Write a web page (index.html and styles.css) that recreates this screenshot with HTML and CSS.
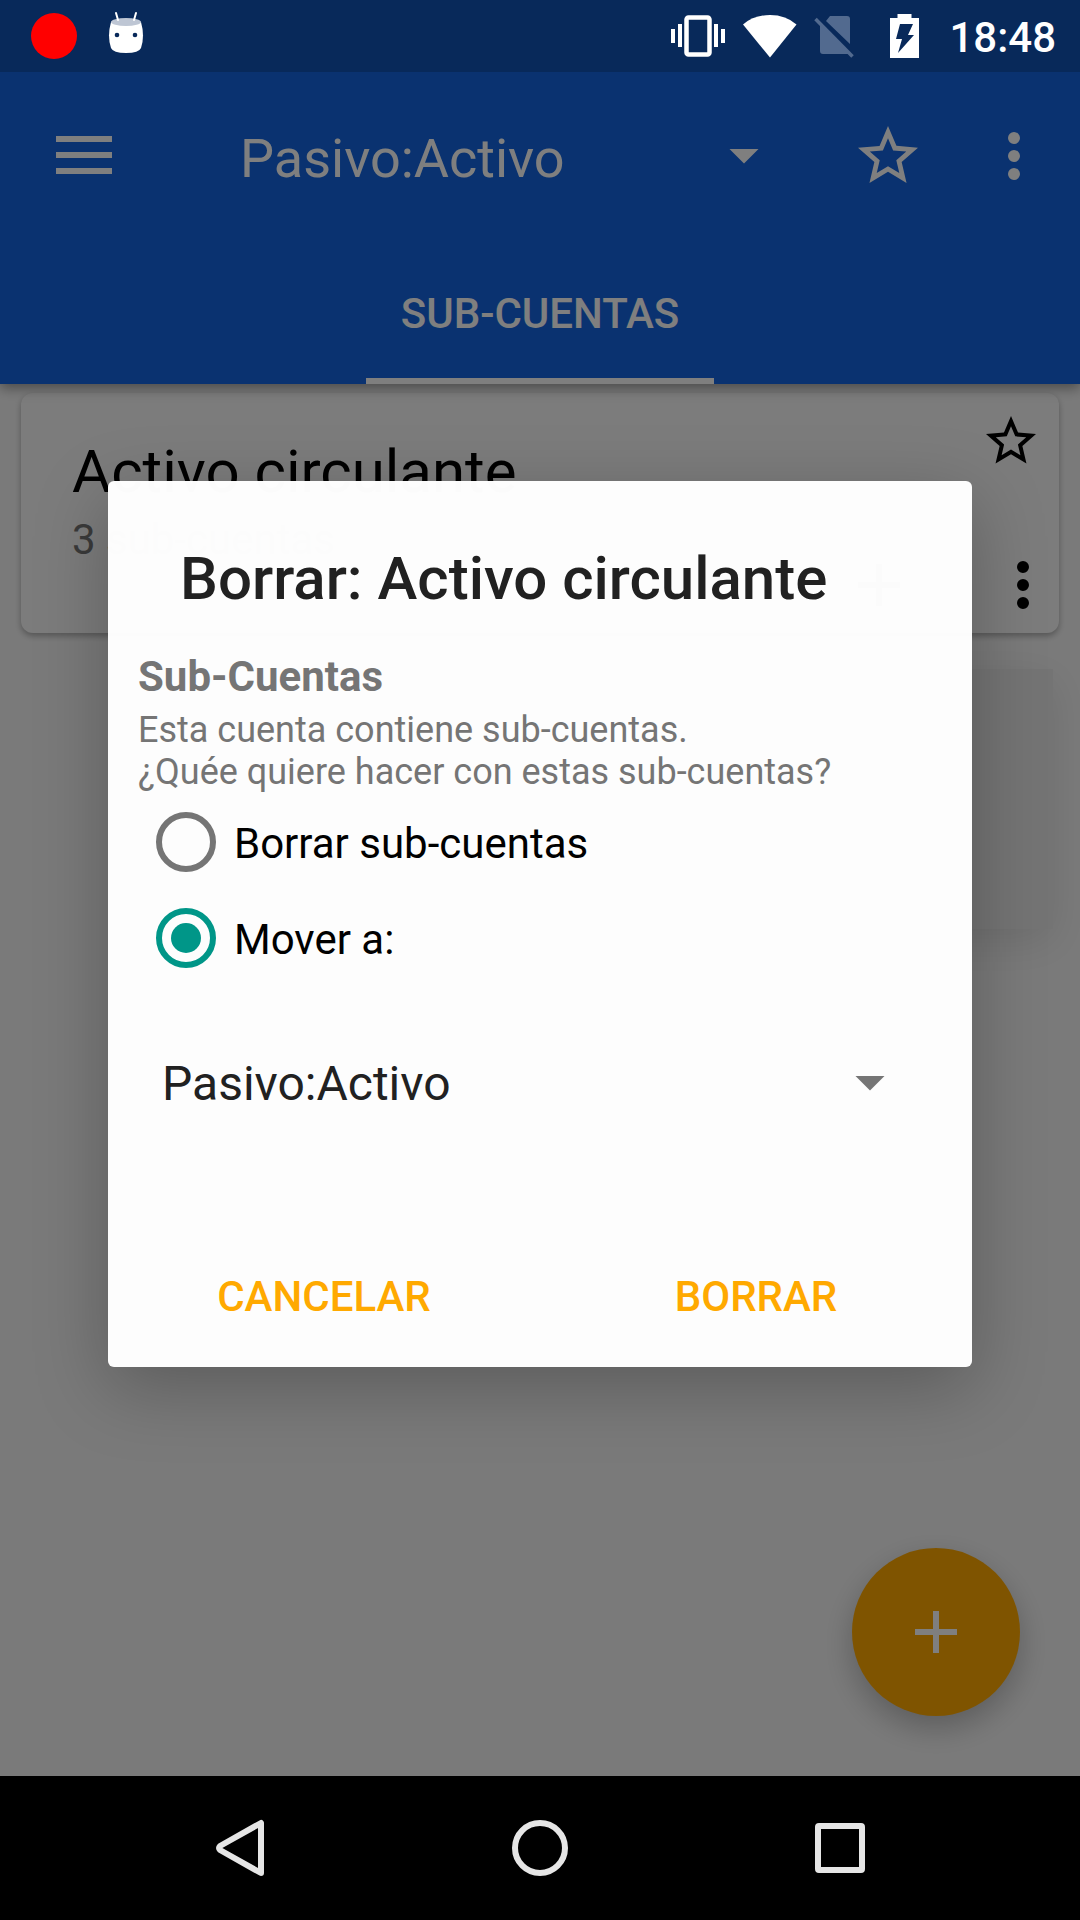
FILE: index.html
```html
<!DOCTYPE html>
<html lang="es">
<head>
<meta charset="utf-8">
<meta name="viewport" content="width=device-width, initial-scale=1">
<title>Pasivo:Activo</title>
<link rel="stylesheet" href="styles.css">
</head>
<body>
<header class="status-bar">
  <span class="record-dot"></span>
  <svg class="status-droid" width="36" height="44" viewBox="0 0 36 44" aria-hidden="true">
    <path d="M3 12Q18 6 33 12Q37 26 33 38Q31 43 18 43Q5 43 3 38Q-1 26 3 12Z" fill="#fff"/>
    <ellipse cx="18" cy="12" rx="15" ry="4" fill="#bec6d4"/>
    <path d="M8 3l2 7M28 3l-2 7" stroke="#fff" stroke-width="2" stroke-linecap="round"/>
    <circle cx="9" cy="25" r="2.3" fill="#08295a"/><circle cx="27" cy="25" r="2.3" fill="#08295a"/>
  </svg>
  <div class="status-right">
    <svg width="54" height="44" viewBox="0 0 54 44" aria-hidden="true">
      <rect x="15.5" y="3.5" width="23" height="37" rx="2" fill="none" stroke="#fff" stroke-width="4.5"/>
      <path d="M0 15h4v14H0zM7 10h4v23H7zM43 10h4v23h-4zM50 15h4v14h-4z" fill="#fff"/>
    </svg>
    <svg class="status-wifi" width="54" height="44" viewBox="0 0 54 44" aria-hidden="true">
      <path d="M0 10.500Q11 1 27 1Q43 1 53.500 10.500L27 43.500Z" fill="#fff"/>
    </svg>
    <svg class="status-sim" width="40" height="44" viewBox="0 0 40 44" aria-hidden="true">
      <path d="M16 2h17a3 3 0 0 1 3 3v25L12 7zM6 11L35 40H9a3 3 0 0 1-3-3z" fill="#526a8f"/>
      <path d="M1.500 5L38.500 42.500" stroke="#526a8f" stroke-width="3.500"/>
    </svg>
    <svg class="status-battery" width="29" height="44" viewBox="0 0 29 44" aria-hidden="true">
      <path d="M7.500 0h14v4H29v40H0V4h7.500z" fill="#fff"/>
      <path d="M10 10h13l-5 11h6L8 39l4-14H6z" fill="#08295a"/>
    </svg>
    <time class="clock">18:48</time>
  </div>
</header>

<div class="app">
  <header class="app-bar">
    <div class="toolbar">
      <button class="icon-button menu-button" type="button" aria-label="Menú">
        <svg width="56" height="40" viewBox="0 0 56 40"><path d="M0 0h56v6H0zM0 16h56v6H0zM0 32h56v6H0z" fill="currentColor"/></svg>
      </button>
      <div class="select-box toolbar-select">
        <select class="select" aria-label="Cuenta"><option>Pasivo:Activo</option></select>
      </div>
      <button class="icon-button" type="button" aria-label="Favorita">
        <svg width="72" height="72" viewBox="0 0 24 24"><path d="M22 9.240l-7.190-.62L12 2 9.190 8.630 2 9.240l5.460 4.730L5.820 21 12 17.270 18.180 21l-1.630-7.030L22 9.240zM12 15.400l-3.760 2.270 1-4.280-3.320-2.880 4.380-.38L12 6.100l1.710 4.040 4.380.38-3.320 2.880 1 4.280L12 15.400z" fill="currentColor"/></svg>
      </button>
      <button class="icon-button overflow-button" type="button" aria-label="Más opciones">
        <svg width="72" height="72" viewBox="0 0 24 24"><path d="M12 8a2 2 0 1 0 0-4 2 2 0 0 0 0 4zm0 2a2 2 0 1 0 0 4 2 2 0 0 0 0-4zm0 6a2 2 0 1 0 0 4 2 2 0 0 0 0-4z" fill="currentColor"/></svg>
      </button>
    </div>
    <nav class="tabs"><a class="tab" href="#sub">SUB-CUENTAS</a></nav>
  </header>

  <main class="content" id="sub">
    <article class="card">
      <div class="card-text">
        <h2 class="card-title">Activo circulante</h2>
        <p class="card-meta">3 sub-cuentas</p>
      </div>
      <div class="card-actions">
        <button class="icon-button card-star" type="button" aria-label="Favorita">
          <svg width="60" height="60" viewBox="0 0 24 24"><path d="M22 9.240l-7.190-.62L12 2 9.190 8.630 2 9.240l5.460 4.730L5.820 21 12 17.270 18.180 21l-1.630-7.030L22 9.240zM12 15.400l-3.760 2.270 1-4.280-3.320-2.880 4.380-.38L12 6.100l1.710 4.040 4.380.38-3.320 2.880 1 4.280L12 15.400z" fill="currentColor"/></svg>
        </button>
        <div class="card-buttons">
          <button class="icon-button" type="button" aria-label="Añadir">
            <svg width="72" height="72" viewBox="0 0 24 24"><path d="M19 13h-6v6h-2v-6H5v-2h6V5h2v6h6z" fill="currentColor"/></svg>
          </button>
          <button class="icon-button" type="button" aria-label="Más opciones">
            <svg width="72" height="72" viewBox="0 0 24 24"><path d="M12 8a2 2 0 1 0 0-4 2 2 0 0 0 0 4zm0 2a2 2 0 1 0 0 4 2 2 0 0 0 0-4zm0 6a2 2 0 1 0 0 4 2 2 0 0 0 0-4z" fill="currentColor"/></svg>
          </button>
        </div>
        <div class="popup-shade"></div>
      </div>
    </article>
    <button class="fab" type="button" aria-label="Nueva cuenta">
      <svg width="72" height="72" viewBox="0 0 24 24"><path d="M19 13h-6v6h-2v-6H5v-2h6V5h2v6h6z" fill="currentColor"/></svg>
    </button>
  </main>
</div>

<div class="scrim">
  <form class="dialog" role="dialog" aria-labelledby="dialog-title">
    <h1 class="dialog-title" id="dialog-title">Borrar: Activo circulante</h1>
    <fieldset class="dialog-body">
      <legend class="section-title">Sub-Cuentas</legend>
      <p class="section-text">Esta cuenta contiene sub-cuentas.<br>¿Quée quiere hacer con estas sub-cuentas?</p>
      <label class="option"><input class="radio" type="radio" name="accion" value="borrar"><span>Borrar sub-cuentas</span></label>
      <label class="option"><input class="radio" type="radio" name="accion" value="mover" checked><span>Mover a:</span></label>
      <div class="select-box dialog-select">
        <select class="select" aria-label="Mover a"><option>Pasivo:Activo</option></select>
      </div>
    </fieldset>
    <div class="dialog-actions">
      <button class="text-button" type="button">CANCELAR</button>
      <button class="text-button" type="button">BORRAR</button>
    </div>
  </form>
</div>

<nav class="nav-bar">
  <button class="nav-button" type="button" aria-label="Atrás">
    <svg width="60" height="60" viewBox="0 0 60 60"><path d="M51 5v50L10 32q-2-2 0-4z" fill="none" stroke="#e6e6e6" stroke-width="6" stroke-linejoin="round"/></svg>
  </button>
  <button class="nav-button" type="button" aria-label="Inicio">
    <svg width="60" height="60" viewBox="0 0 60 60"><circle cx="30" cy="30" r="25" fill="none" stroke="#e6e6e6" stroke-width="6"/></svg>
  </button>
  <button class="nav-button" type="button" aria-label="Recientes">
    <svg width="60" height="60" viewBox="0 0 60 60"><rect x="8" y="8" width="44" height="44" rx="1" fill="none" stroke="#e6e6e6" stroke-width="6" stroke-linejoin="round"/></svg>
  </button>
</nav>
</body>
</html>
```

FILE: styles.css
```css
:root {
  --primary: #1465e0;
  --accent: #ffa900;
  --teal: #009688;
  --status-height: 72px;
  --nav-height: 144px;
}

* {
  box-sizing: border-box;
}

body {
  margin: 0;
  min-height: 100vh;
  display: flex;
  flex-direction: column;
  position: relative;
  background: #f5f5f5;
  font-family: Roboto, "Noto Sans", sans-serif;
  font-size: 42px;
}

h1, h2, p {
  margin: 0;
}

button {
  border: 0;
  padding: 0;
  background: none;
  font: inherit;
  color: inherit;
}

svg {
  display: block;
}

/* Status bar */
.status-bar {
  position: relative;
  z-index: 3;
  height: var(--status-height);
  padding: 0 24px 0 31px;
  display: flex;
  align-items: center;
  background: #08295a;
  color: #fff;
}

.record-dot {
  width: 46px;
  height: 46px;
  border-radius: 50%;
  background: #f00;
}

.status-droid {
  margin: 0 0 8px 31px;
}

.status-right {
  margin-left: auto;
  display: flex;
  align-items: center;
}

.status-wifi {
  margin-left: 18px;
}

.status-sim {
  margin-left: 17px;
}

.status-battery {
  margin-left: 36px;
}

.clock {
  margin-left: 30px;
  padding-top: 3px;
  font-weight: 500;
  line-height: 48px;
}

/* App */
.app {
  flex: 1;
  display: flex;
  flex-direction: column;
}

.app-bar {
  background: var(--primary);
  color: #fff;
  box-shadow: 0 4px 12px rgba(0, 0, 0, 0.4);
  position: relative;
}

.toolbar {
  height: 168px;
  padding: 0 30px 0 56px;
  display: flex;
  align-items: center;
}

.toolbar-select {
  flex: 1;
  margin: 0 36px 0 128px;
  font-size: 54px;
}

.toolbar-select .select {
  padding-top: 4px;
}

.overflow-button {
  margin-left: 54px;
}

.select-box {
  display: flex;
  align-items: center;
}

.select-box::after {
  content: "";
  width: 30px;
  height: 15px;
  margin: 0 57px 0 -87px;
  background: currentColor;
  clip-path: polygon(0 0, 100% 0, 50% 100%);
  pointer-events: none;
}

.select {
  appearance: none;
  flex: 1;
  min-width: 0;
  height: 96px;
  border: 0;
  padding: 0;
  background: none;
  font: inherit;
  color: inherit;
}

.tabs {
  height: 144px;
  display: flex;
  justify-content: center;
}

.tab {
  padding: 8px 35px 0;
  display: flex;
  align-items: center;
  border-bottom: 6px solid #fff;
  color: inherit;
  font-weight: 500;
  text-decoration: none;
}

.content {
  flex: 1;
  padding: 9px 21px 60px;
  display: flex;
  flex-direction: column;
}

.card {
  min-height: 240px;
  padding-left: 51px;
  display: flex;
  justify-content: space-between;
  border-radius: 12px;
  background: #f8f8f8;
  box-shadow: 0 3px 6px rgba(0, 0, 0, 0.3);
  color: #000;
}

.card-text {
  padding-top: 43px;
}

.card-title {
  font-size: 60px;
  font-weight: 400;
  line-height: 72px;
}

.card-meta {
  margin-top: 8px;
  line-height: 48px;
  color: #757575;
}

.card-actions {
  position: relative;
  padding: 18px 0 12px;
  display: flex;
  flex-direction: column;
  justify-content: space-between;
  align-items: flex-end;
}

.card-star {
  margin-right: 18px;
}

.card-buttons {
  display: flex;
  gap: 72px;
}

/* Shade of the card's menu, fading out below the overflow button */
.popup-shade {
  position: absolute;
  top: 276px;
  right: 6px;
  width: 480px;
  height: 260px;
  background: rgba(0, 0, 0, 0.05);
  box-shadow: 0 12px 40px rgba(0, 0, 0, 0.1);
  pointer-events: none;
}

.fab {
  width: 168px;
  height: 168px;
  margin: auto 39px 0 auto;
  display: flex;
  align-items: center;
  justify-content: center;
  border-radius: 50%;
  background: var(--accent);
  color: #fff;
  box-shadow: 0 12px 30px rgba(0, 0, 0, 0.24);
}

/* Dialog */
.scrim {
  position: absolute;
  inset: 0;
  z-index: 2;
  padding: var(--status-height) 10% var(--nav-height);
  display: flex;
  align-items: center;
  background: rgba(0, 0, 0, 0.5);
}

.dialog {
  flex: 1;
  min-width: 0;
  padding-top: 60px;
  border-radius: 6px;
  background: rgba(255, 255, 255, 0.985);
  box-shadow: 0 20px 72px rgba(0, 0, 0, 0.25);
}

.dialog-title {
  padding: 0 72px;
  font-size: 60px;
  font-weight: 500;
  line-height: 76px;
  color: #212121;
}

.dialog-body {
  min-width: 0;
  margin: 36px 0 0;
  border: 0;
  padding: 0 30px;
}

.section-title {
  padding: 0;
  font-weight: 700;
  line-height: 48px;
  color: #757575;
}

.section-text {
  margin: 8px 0 1px;
  font-size: 36px;
  line-height: 42px;
  color: #757575;
}

.option {
  height: 96px;
  padding-left: 18px;
  display: flex;
  align-items: center;
  gap: 18px;
  color: #000;
}

.option span {
  padding-top: 2px;
}

.radio {
  appearance: none;
  width: 60px;
  height: 60px;
  margin: 0;
  border: 6px solid #757575;
  border-radius: 50%;
}

.radio:checked {
  border-color: var(--teal);
  padding: 9px;
  background: var(--teal) content-box;
}

.dialog-select {
  margin-top: 49px;
  font-size: 48px;
  color: #757575;
}

.dialog-select .select {
  padding-left: 24px;
  color: #212121;
}

.dialog-actions {
  margin-top: 94px;
  display: flex;
}

.text-button {
  flex: 1;
  height: 142px;
  font-weight: 500;
  color: var(--accent);
}

/* System navigation */
.nav-bar {
  position: relative;
  z-index: 3;
  height: var(--nav-height);
  display: flex;
  justify-content: center;
  background: #000;
}

.nav-button {
  width: 300px;
  display: flex;
  align-items: center;
  justify-content: center;
}
```
